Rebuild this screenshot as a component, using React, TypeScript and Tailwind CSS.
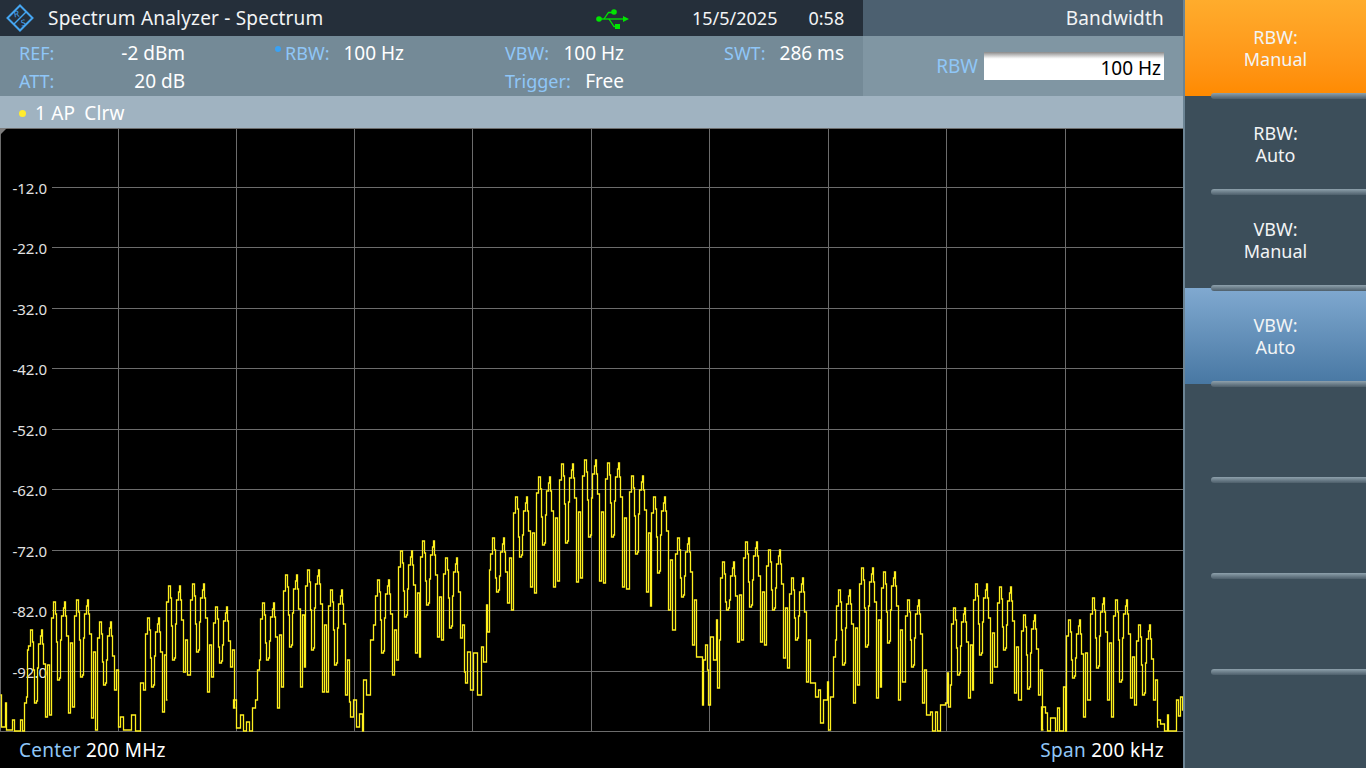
const font = { fontFamily: '"Noto Sans", sans-serif' };

// x1, top, notch, deep, sec, deep2, then points of the noise floor after the pair
type Tooth = [number, number, number, number, number, number, number[][]?];

const teeth: Tooth[] = [
  [30, 630, 703, 717, 665, 715],
  [53, 602, 680, 713, 643, 707],
  [76, 600, 677, 718, 652, 730],
  [99, 622, 685, 690, 670, 727, [[118, 727], [120, 717], [123, 730], [128, 730], [131, 715], [135, 731], [139, 731], [140, 683], [143, 690]]],
  [147, 618, 687, 712, 655, 700],
  [168, 586, 660, 672, 640, 675],
  [192, 584, 652, 692, 645, 677],
  [215, 607, 663, 667, 650, 708, [[233, 700], [236, 728], [240, 715], [243, 731], [246, 722], [249, 731], [252, 708], [255, 700], [257, 670], [259, 660]]],
  [262, 603, 660, 708, 635, 687],
  [285, 575, 647, 687, 615, 667],
  [307, 570, 650, 692, 625, 692],
  [330, 590, 665, 695, 660, 702, [[350, 717], [353, 700], [356, 727], [359, 714], [362, 731], [363, 680], [366, 695], [370, 640], [373, 625]]],
  [377, 580, 653, 675, 630, 660],
  [400, 551, 617, 653, 593, 657],
  [422, 541, 605, 637, 597, 640],
  [445, 558, 628, 638, 625, 672, [[465, 683], [467, 652], [470, 690], [473, 653], [477, 695], [481, 647], [483, 662], [486, 605], [487, 632], [489, 570]]],
  [492, 538, 592, 603, 558, 610],
  [515, 497, 557, 587, 533, 593],
  [538, 477, 545, 587, 518, 581],
  [561, 464, 543, 582, 512, 578],
  [584, 460, 537, 581, 512, 583],
  [607, 463, 537, 587, 518, 589],
  [631, 476, 554, 592, 533, 606],
  [653, 497, 573, 610, 560, 630],
  [677, 538, 597, 645, 600, 657, [[699, 657], [702, 705], [703, 660], [705, 645], [707, 670], [708, 705], [710, 637], [713, 660], [716, 620], [717, 688], [719, 640], [720, 580]]],
  [722, 562, 610, 642, 595, 640],
  [745, 542, 607, 642, 592, 645],
  [768, 550, 610, 658, 608, 668],
  [791, 578, 640, 682, 640, 683, [[812, 683], [815, 697], [818, 690], [820, 723], [823, 700], [827, 682], [828, 730], [830, 697], [833, 657], [835, 640]]],
  [838, 590, 665, 703, 628, 685],
  [861, 568, 647, 698, 620, 687],
  [883, 572, 643, 700, 630, 682],
  [907, 600, 667, 703, 670, 715, [[930, 712], [932, 731], [935, 712], [937, 731], [940, 705], [945, 703], [947, 673], [948, 707], [950, 685], [951, 640]]],
  [953, 608, 675, 698, 645, 690],
  [975, 584, 655, 683, 633, 667],
  [999, 587, 650, 693, 647, 700],
  [1023, 615, 689, 695, 670, 730, [[1041, 707], [1045, 713], [1047, 731], [1050, 718], [1055, 731], [1057, 708], [1059, 731], [1063, 687], [1065, 731], [1066, 643]]],
  [1068, 620, 678, 717, 653, 700],
  [1092, 598, 668, 700, 643, 717],
  [1115, 600, 682, 698, 657, 705],
  [1138, 625, 695, 700, 680, 727, [[1157, 720], [1160, 724], [1164, 731], [1167, 715], [1168, 731], [1174, 731], [1176, 700], [1178, 716], [1180, 697], [1182, 710], [1184, 700]]],
];

function buildTrace() {
  const start = [[0, 695], [1, 727], [3, 727], [5, 703], [6, 730], [10, 730], [12, 720], [14, 731], [19, 731], [20, 720], [22, 731], [24, 703], [26, 697], [27, 650]];
  const pts: number[][] = [...start];
  for (const [x, top, notch, deep, sec, deep2, after] of teeth) {
    pts.push(
      [x - 2, top + 16], [x, top], [x + 2, top + 12], [x + 3, top + 40],
      [x + 4, notch], [x + 6, notch - 2], [x + 7, top + 38], [x + 8, top + 14], [x + 10, top + 6],
      [x + 11, top], [x + 12, top + 14], [x + 13, top + 34], [x + 15, deep], [x + 16, deep],
      [x + 17, sec], [x + 18, sec], [x + 19, deep2], [x + 20, deep2],
    );
    if (after) pts.push(...after);
  }
  return pts.map(([x, y], i) => (i === 0 ? `M${x + 0.5} ${y - 128}` : `H${x + 0.5}V${y - 128}`)).join('');
}

const gridX = [118, 236, 354, 472, 591, 709, 828, 946, 1065];
const gridY = [
  { y: 187, label: '-12.0' },
  { y: 247, label: '-22.0' },
  { y: 308, label: '-32.0' },
  { y: 368, label: '-42.0' },
  { y: 429, label: '-52.0' },
  { y: 489, label: '-62.0' },
  { y: 550, label: '-72.0' },
  { y: 610, label: '-82.0' },
  { y: 671, label: '-92.0' },
];

function Logo() {
  return (
    <svg width="28" height="28" viewBox="0 0 28 28" className="ml-[6px] shrink-0">
      <path d="M14 1.5 26.5 14 14 26.5 1.5 14Z" fill="none" stroke="#45a5f0" strokeWidth="2" />
      <path d="M7.5 20.5 20.5 7.5" stroke="#45a5f0" strokeWidth="1.5" />
      <text x="10.5" y="13" fontSize="9" fill="#45a5f0" textAnchor="middle" transform="rotate(-10 10.5 10)">R</text>
      <text x="17.5" y="22" fontSize="9" fill="#45a5f0" textAnchor="middle" transform="rotate(-10 17.5 19)">S</text>
    </svg>
  );
}

function UsbIcon() {
  return (
    <svg width="34" height="24" viewBox="0 0 34 24" className="shrink-0">
      <g stroke="#00e600" strokeWidth="1.3" fill="none">
        <path d="M3 13H28" />
        <path d="M8 13 12.5 6.5H16" />
        <path d="M13 13 18 20.5H20" />
      </g>
      <circle cx="3" cy="13" r="2.8" fill="#00e600" />
      <circle cx="18" cy="6" r="2.8" fill="#00e600" />
      <rect x="19" y="18" width="5" height="5" fill="#00e600" />
      <path d="M27 10 33 13 27 16Z" fill="#00e600" />
    </svg>
  );
}

function InfoBlock({ className, rows }: { className: string; rows: [string, string][] }) {
  return (
    <div className={className}>
      {rows.map(([label, value]) => (
        <div key={label} className="flex h-7 items-center justify-between">
          <span className="text-[18px] text-[#8fc6f7]">{label}</span>
          <span className="text-[19px] text-white">{value}</span>
        </div>
      ))}
    </div>
  );
}

function SoftKey({ top, bottom, tone }: { top: string; bottom: string; tone?: 'orange' | 'blue' }) {
  return (
    <div
      className={`relative flex h-24 flex-col items-center justify-start pt-[26px] text-[18px] leading-[22px] text-[#f2f4f5] ${
        tone === 'orange'
          ? 'bg-gradient-to-b from-[#ffac2c] to-[#ff8a00]'
          : tone === 'blue'
            ? 'bg-gradient-to-b from-[#80a9d0] to-[#4878a3]'
            : 'bg-[#3c4e5a]'
      }`}
    >
      <span>{top}</span>
      <span>{bottom}</span>
      <div className="absolute right-0 bottom-[-3px] left-[26px] z-10 h-[6px] rounded-l-[3px] bg-gradient-to-b from-[#8ea1ac] to-[#4e5f6b]" />
    </div>
  );
}

export default function App() {
  const tracePath = buildTrace();

  return (
    <div className="flex h-[768px] w-[1366px] overflow-hidden bg-black" style={font}>
      <div className="flex w-[1183px] shrink-0 flex-col">
        <header className="flex h-9">
          <div className="flex w-[863px] items-center bg-[#252f3a] text-[#f2f4f5]">
            <Logo />
            <span className="ml-[14px] w-[275px] text-[19px] tracking-[0.2px] whitespace-nowrap">Spectrum Analyzer - Spectrum</span>
            <div className="ml-[273px]"><UsbIcon /></div>
            <span className="ml-[62px] text-[18px]">15/5/2025</span>
            <span className="ml-[31px] text-[18px]">0:58</span>
          </div>
          <div className="flex flex-1 items-center justify-end bg-[#4c6070] pr-[19px] text-[19px] tracking-[0.2px] text-[#f2f4f5]">Bandwidth</div>
        </header>

        <section className="flex h-[60px]">
          <div className="flex w-[863px] bg-[#748a97] pt-[3px] pl-[19px]">
            <InfoBlock className="w-[166px]" rows={[['REF:', '-2 dBm'], ['ATT:', '20 dB']]} />
            <div className="relative ml-[100px] w-[119px]">
              <span className="absolute top-[7px] left-[-10px] h-[6px] w-[6px] rounded-full bg-[#3aa2f5]" />
              <InfoBlock className="" rows={[['RBW:', '100 Hz']]} />
            </div>
            <InfoBlock className="ml-[101px] w-[119px]" rows={[['VBW:', '100 Hz'], ['Trigger:', 'Free']]} />
            <InfoBlock className="ml-[100px] w-[120px]" rows={[['SWT:', '286 ms']]} />
          </div>
          <div className="flex flex-1 items-center justify-end bg-[#8096a3] pr-[19px] text-[19px]">
            <span className="mr-[6px] text-[#8fc6f7]">RBW</span>
            <div className="flex h-7 w-[180px] items-center justify-end bg-[linear-gradient(#8a8a8a,#f4f4f4_6px,#ffffff_7px)] pt-[4px] pr-[3px] text-black">
              100 Hz
            </div>
          </div>
        </section>

        <div className="flex h-8 items-center bg-[#a0b3c1] pt-[2px] pl-[19px] text-[19px] tracking-[0.2px] text-white">
          <span className="mr-[9px] h-[7px] w-[7px] rounded-full bg-[#ffec2e]" />
          <span>1 AP</span>
          <span className="ml-[9px]">Clrw</span>
        </div>

        <div className="h-[604px]">
          <svg width="1183" height="604" viewBox="0 0 1183 604" className="block">
            <rect width="1183" height="604" fill="#000" />
            <g stroke="#6c6c6c" strokeWidth="1" shapeRendering="crispEdges">
              <path d="M0 .5H1183M.5 0V603M0 603.5H1183" />
              {gridX.map((x) => <path key={x} d={`M${x + 0.5} 0V603`} />)}
              {gridY.map((g) => <path key={g.y} d={`M52 ${g.y - 127.5}H1183`} />)}
            </g>
            <path d="M0 0H7L0 7Z" fill="#7d7d7d" />
            {gridY.map((g) => (
              <text key={g.label} x="47" y={g.y - 128 + 7} textAnchor="end" fontSize="15" fill="#e2e2e2">{g.label}</text>
            ))}
            <path d={tracePath} fill="none" stroke="#fff01e" strokeWidth="1.3" />
          </svg>
        </div>

        <footer className="flex flex-1 items-center justify-between px-[19px] text-[19px] tracking-[0.3px] text-white">
          <div><span className="text-[#8fc6f7]">Center</span> 200 MHz</div>
          <div><span className="text-[#8fc6f7]">Span</span> 200 kHz</div>
        </footer>
      </div>

      <div className="w-[2px] shrink-0 bg-[#6c8494]" />

      <aside className="flex flex-1 flex-col bg-[#3c4e5a]">
        <SoftKey top="RBW:" bottom="Manual" tone="orange" />
        <SoftKey top="RBW:" bottom="Auto" />
        <SoftKey top="VBW:" bottom="Manual" />
        <SoftKey top="VBW:" bottom="Auto" tone="blue" />
        <SoftKey top="" bottom="" />
        <SoftKey top="" bottom="" />
        <SoftKey top="" bottom="" />
        <div className="flex-1" />
      </aside>
    </div>
  );
}
